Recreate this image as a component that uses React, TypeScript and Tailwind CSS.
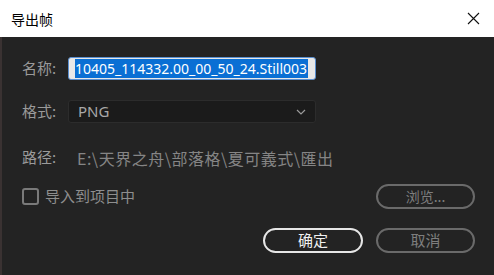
export default function App() {
  const cjk = { fontFamily: '"Noto Sans CJK SC", "Noto Sans", sans-serif' };
  const latin = { fontFamily: '"Noto Sans", "Noto Sans CJK SC", sans-serif' };

  return (
    <div className="w-[494px] h-[275px] flex flex-col overflow-hidden bg-[#232323]" style={cjk}>
      {/* 标题栏 */}
      <div className="h-[37px] bg-white flex items-center justify-between pl-[11px] pr-[14px] shrink-0">
        <span className="text-[14px] text-black leading-none">导出帧</span>
        <svg width="13" height="13" viewBox="0 0 13 13" fill="none" stroke="#111" strokeWidth="1.1">
          <path d="M1 1l11 11M12 1L1 12" />
        </svg>
      </div>

      <div className="flex-1 border-l-2 border-[#3a3232] pl-[20px] pr-[19px] pt-[20px]">
        <div className="flex items-center h-[23px]">
          <span className="w-[46px] text-[15px] text-[#9a9a9a]">名称:</span>
          <div className="w-[248px] h-[23px] rounded-[3px] border border-[#5a8fd0] bg-[#e8e8e8] flex items-center pl-[6px] overflow-hidden">
            <span className="bg-[#0a6fd4] text-white text-[14px] leading-[19px] whitespace-nowrap pr-[1px]" style={latin}>
              10405_114332.00_00_50_24.Still003
            </span>
          </div>
        </div>

        <div className="flex items-center h-[23px] mt-[20px]">
          <span className="w-[46px] text-[15px] text-[#9a9a9a]">格式:</span>
          <div className="w-[248px] h-[23px] rounded-[3px] border border-[#2c2c2c] bg-[#1b1b1b] flex items-center justify-between pl-[9px] pr-[9px]">
            <span className="text-[15px] text-[#a8a8a8]" style={latin}>PNG</span>
            <svg width="10" height="6" viewBox="0 0 10 6" fill="none" stroke="#9a9a9a" strokeWidth="1.2">
              <path d="M1 1l4 4 4-4" />
            </svg>
          </div>
        </div>

        <div className="flex items-center h-[23px] mt-[23px] whitespace-nowrap">
          <span className="w-[55px] text-[15px] text-[#9a9a9a]">路径:</span>
          <span className="text-[16px] tracking-[0.5px] text-[#858585]">E:\天界之舟\部落格\夏可義式\匯出</span>
        </div>

        <div className="flex items-center justify-between mt-[15px] h-[25px]">
          <label className="flex items-center gap-[6px]">
            <span className="w-[17px] h-[17px] rounded-[3px] border-2 border-[#7a7a7a]" />
            <span className="text-[15px] text-[#8e8e8e]">导入到项目中</span>
          </label>
          <button className="w-[99px] h-[25px] rounded-full border-2 border-[#6a6a6a] text-[14px] text-[#7e7e7e] flex items-center justify-center">
            浏览...
          </button>
        </div>

        <div className="flex justify-end gap-[13px] mt-[19px]">
          <button className="w-[100px] h-[25px] rounded-full border-2 border-[#e6e6e6] text-[15px] text-[#efefef] flex items-center justify-center">
            确定
          </button>
          <button className="w-[99px] h-[25px] rounded-full border-2 border-[#6a6a6a] text-[15px] text-[#7e7e7e] flex items-center justify-center">
            取消
          </button>
        </div>
      </div>
    </div>
  );
}
